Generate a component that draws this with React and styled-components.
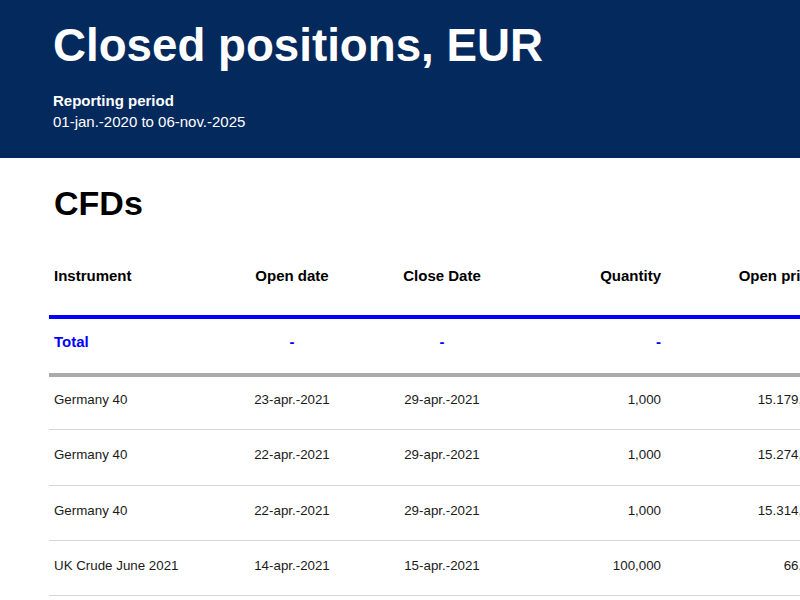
import React from "react";
import styled, { createGlobalStyle } from "styled-components";

const GlobalStyle = createGlobalStyle`
  html, body {
    margin: 0;
    padding: 0;
    overflow: hidden;
    background: #ffffff;
    font-family: "Liberation Sans", Arial, sans-serif;
  }
`;

const Page = styled.div`
  width: 800px;
  overflow: hidden;
`;

const Banner = styled.header`
  height: 158px;
  box-sizing: border-box;
  padding: 18px 0 0 53px;
  background: #04295d;
  color: #ffffff;
`;

const Title = styled.h1`
  margin: 0;
  font-size: 45.7px;
  line-height: 56px;
  font-weight: 700;
  white-space: nowrap;
`;

const PeriodLabel = styled.div`
  margin-top: 18px;
  font-size: 15px;
  line-height: 18px;
  font-weight: 700;
`;

const PeriodValue = styled.div`
  margin-top: 3px;
  font-size: 15px;
  line-height: 18px;
`;

const Section = styled.section`
  padding-left: 49px;
`;

const SectionTitle = styled.h2`
  margin: 25px 0 18px 5px;
  font-size: 34px;
  line-height: 40px;
  font-weight: 700;
  color: #000000;
`;

const Table = styled.table`
  table-layout: fixed;
  border-collapse: separate;
  border-spacing: 0;
  width: 930px;
`;

const HeadCell = styled.th`
  padding: 26px ${(p) => (p.$align === "right" ? "6px" : "5px")} 30px;
  font-size: 15px;
  line-height: 18px;
  font-weight: 700;
  color: #000000;
  text-align: ${(p) => p.$align || "left"};
  white-space: nowrap;
  border-bottom: 4px solid #0000ff;
`;

const TotalCell = styled.td`
  padding: 14px ${(p) => (p.$align === "right" ? "6px" : "5px")} 22px;
  font-size: 15px;
  line-height: 18px;
  font-weight: 700;
  color: #0000ff;
  text-align: ${(p) => p.$align || "left"};
  white-space: nowrap;
  border-bottom: 4px solid #aaaaaa;
`;

const Row = styled.tr`
  &:nth-child(2) td {
    padding-top: 15px;
  }
`;

const Cell = styled.td`
  padding: 17px ${(p) => (p.$align === "right" ? "6px" : "5px")} 21.33px;
  font-size: 13.33px;
  line-height: 16px;
  color: #1a1a1a;
  text-align: ${(p) => p.$align || "left"};
  white-space: nowrap;
  border-bottom: 1px solid #d6d6d6;
`;

const columns = [
  { key: "instrument", label: "Instrument", width: 168, align: "left" },
  { key: "openDate", label: "Open date", width: 150, align: "center" },
  { key: "closeDate", label: "Close Date", width: 150, align: "center" },
  { key: "quantity", label: "Quantity", width: 150, align: "right" },
  { key: "openPrice", label: "Open price", width: 156, align: "right" },
  { key: "closePrice", label: "Close price", width: 156, align: "right" },
];

const rows = [
  {
    instrument: "Germany 40",
    openDate: "23-apr.-2021",
    closeDate: "29-apr.-2021",
    quantity: "1,000",
    openPrice: "15.179,50",
    closePrice: "15.286,00",
  },
  {
    instrument: "Germany 40",
    openDate: "22-apr.-2021",
    closeDate: "29-apr.-2021",
    quantity: "1,000",
    openPrice: "15.274,00",
    closePrice: "15.286,00",
  },
  {
    instrument: "Germany 40",
    openDate: "22-apr.-2021",
    closeDate: "29-apr.-2021",
    quantity: "1,000",
    openPrice: "15.314,50",
    closePrice: "15.286,00",
  },
  {
    instrument: "UK Crude June 2021",
    openDate: "14-apr.-2021",
    closeDate: "15-apr.-2021",
    quantity: "100,000",
    openPrice: "66,74",
    closePrice: "67,12",
  },
  {
    instrument: "Germany 40",
    openDate: "12-apr.-2021",
    closeDate: "13-apr.-2021",
    quantity: "1,000",
    openPrice: "15.221,00",
    closePrice: "15.240,50",
  },
];

const totals = ["Total", "-", "-", "-", "", ""];

export default function App() {
  return (
    <Page>
      <GlobalStyle />
      <Banner>
        <Title>Closed positions, EUR</Title>
        <PeriodLabel>Reporting period</PeriodLabel>
        <PeriodValue>01-jan.-2020 to 06-nov.-2025</PeriodValue>
      </Banner>
      <Section>
        <SectionTitle>CFDs</SectionTitle>
        <Table>
          <colgroup>
            {columns.map((c) => (
              <col key={c.key} style={{ width: c.width }} />
            ))}
          </colgroup>
          <thead>
            <tr>
              {columns.map((c) => (
                <HeadCell key={c.key} $align={c.align}>
                  {c.label}
                </HeadCell>
              ))}
            </tr>
          </thead>
          <tbody>
            <tr>
              {columns.map((c, i) => (
                <TotalCell key={c.key} $align={c.align}>
                  {totals[i]}
                </TotalCell>
              ))}
            </tr>
            {rows.map((row, r) => (
              <Row key={r}>
                {columns.map((c) => (
                  <Cell key={c.key} $align={c.align}>
                    {row[c.key]}
                  </Cell>
                ))}
              </Row>
            ))}
          </tbody>
        </Table>
      </Section>
    </Page>
  );
}
